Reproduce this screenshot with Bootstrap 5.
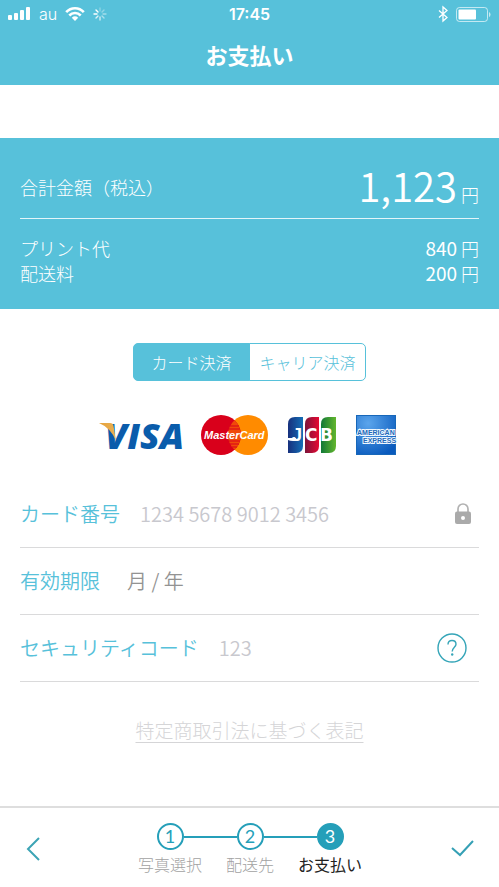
<!DOCTYPE html>
<html lang="ja">
<head>
<meta charset="utf-8">
<meta name="viewport" content="width=device-width, initial-scale=1">
<title>お支払い</title>
<link href="https://cdn.jsdelivr.net/npm/bootstrap@5.3.0/dist/css/bootstrap.min.css" rel="stylesheet">
<style>
:root { --sky: #57c1da; --teal: #259fb9; --rule: #dadadb; }
body { font-family: "Noto Sans CJK JP", sans-serif; font-weight: 300; background: #fff; }
svg { display: block; flex: none; overflow: visible; }
.bg-sky { background: var(--sky); color: #fff; }
.status { font-family: Inter, sans-serif; font-size: 16px; line-height: 28px; padding: 0 8px; }
.status > div { flex: 1 1 0; }
.clock { font-weight: 600; }
.page-title { font-size: 22px; line-height: 32px; font-weight: 700; padding: 10px 0 15px; margin: 0; }
.summary { margin-top: 53px; padding: 18px 20px 23px; font-size: 18px; line-height: 25px; }
.total { padding-bottom: 4px; border-bottom: 1px solid #e3f5f9; margin-bottom: 17px; }
.amount { font-size: 40px; line-height: 58px; font-weight: 350; }
.digits { font-size: 19px; line-height: 19px; font-weight: 400; }
dt { font-weight: 300; }
.methods { width: 233px; margin: 34px auto 0; }
.methods .btn { flex: 1 1 0; padding: 0; font-size: 16px; line-height: 36px; font-weight: 300; white-space: nowrap;
  --bs-btn-color: var(--sky); --bs-btn-border-color: var(--sky); --bs-btn-border-radius: 5px;
  --bs-btn-active-bg: var(--sky); --bs-btn-active-border-color: var(--sky); --bs-btn-active-color: #fff;
  --bs-btn-hover-color: var(--sky); --bs-btn-hover-border-color: var(--sky); }
.brands { padding: 34px 5px 0 0; }
.entry-list { padding: 26px 20px 0; }
.entry { height: 67px; border-bottom: 1px solid var(--rule); font-size: 20px; }
.entry label { color: var(--sky); white-space: nowrap; font-weight: 350; }
.entry .form-control { min-width: 0; flex: 1 1 0; border: 0; padding: 0 0 0 20px; font-size: 20px; line-height: 30px; background: none; font-weight: 350; box-shadow: none; }
.entry .expiry { padding-left: 27px; }
.entry .form-control::placeholder { color: #c8c8ce; opacity: 1; }
.entry .expiry::placeholder { color: #939393; }
.legal-note { padding-top: 34px; }
.legal { font-size: 19px; line-height: 28px; color: #d5d5d7; text-underline-offset: 4px; text-decoration-thickness: 1px; }
.footer-bar { border-top: 2px solid #dedede; padding: 15px 19px 13px 20px; background: #fff; }
.steps { font-size: 16px; line-height: 20px; color: #a2a2a2; }
.steps li { width: 80px; white-space: nowrap; text-align: center; }
.line { flex: 1 1 0; height: 2px; background: var(--teal); }
.dot { width: 27px; height: 27px; border: 2px solid var(--teal); border-radius: 50%; color: var(--teal); font: 400 18px/23px Lato, sans-serif; }
.active-step .dot { background: var(--teal); color: #fff; }
.active-step { color: #222; font-weight: 400; }
.plain { border: 0; background: none; padding: 0; }
</style>
<script src="https://cdn.jsdelivr.net/npm/bootstrap@5.3.0/dist/js/bootstrap.bundle.min.js"></script>
</head>
<body class="d-flex flex-column min-vh-100">
<header class="bg-sky">
  <div class="status d-flex align-items-center">
    <div class="d-flex align-items-center">
      <svg width="23" height="14" fill="#fff"><rect y="8" width="4" height="5" rx="1"/><rect x="6" y="6" width="4" height="7" rx="1"/><rect x="12" y="3" width="4" height="10" rx="1"/><rect x="18" width="4" height="13" rx="1"/></svg>
      <span class="ms-2 me-2">au</span>
      <svg width="20" height="14" viewBox="0 0 20 14" fill="none" stroke="#fff" stroke-width="2.6"><path d="M1.2 5.2C6-.1 14-.1 18.800 5.2M4.300 8.500C7.500 5.200 12.500 5.200 15.700 8.500"/><path d="M6.800 10.700Q10 7.900 13.200 10.700L10 14Z" fill="#fff" stroke="none"/></svg>
      <svg class="ms-2" width="14" height="14" viewBox="-7 -7 14 14" stroke="#fff" stroke-width="1.4" stroke-linecap="round"><path d="M0-3V-6" opacity=".3"/><path d="M2-2L4-4" opacity=".35"/><path d="M3 0H6" opacity=".45"/><path d="M2 2L4 4" opacity=".5"/><path d="M0 3V6" opacity=".7"/><path d="M-2 2L-4 4" opacity=".8"/><path d="M-3 0H-6M-2-2L-4-4"/></svg>
    </div>
    <span class="clock">17:45</span>
    <div class="d-flex align-items-center justify-content-end">
      <svg class="me-2" width="10" height="16" viewBox="0 0 10 16" fill="none" stroke="#fff" stroke-width="1.300"><path d="M1 4.500L9 11.500L5 15V1L9 4.500L1 11.500"/></svg>
      <svg width="35" height="15" viewBox="0 0 35 15"><rect x=".5" y=".5" width="31" height="14" rx="3" fill="none" stroke="#fff" stroke-opacity=".65"/><rect x="2.500" y="2.500" width="17.500" height="10" rx="1" fill="#fff"/><path d="M33 5V10Q34.500 9.500 34.500 7.500T33 5" fill="#fff" fill-opacity=".65"/></svg>
    </div>
  </div>
  <h1 class="page-title text-center">お支払い</h1>
</header>

<main class="flex-grow-1">
  <dl class="summary bg-sky mb-0">
    <div class="total d-flex justify-content-between align-items-center">
      <dt class="pt-1">合計金額（税込）</dt>
      <dd class="mb-0"><span class="amount">1,123</span> 円</dd>
    </div>
    <div class="d-flex justify-content-between"><dt>プリント代</dt><dd class="mb-0"><span class="digits">840</span> 円</dd></div>
    <div class="d-flex justify-content-between"><dt>配送料</dt><dd class="mb-0"><span class="digits">200</span> 円</dd></div>
  </dl>

  <div class="methods btn-group d-flex" role="group" aria-label="お支払い方法">
    <button type="button" class="btn btn-outline-info active" aria-pressed="true">カード決済</button>
    <button type="button" class="btn btn-outline-info" aria-pressed="false">キャリア決済</button>
  </div>

  <div class="brands d-flex justify-content-center align-items-center">
    <svg width="86" height="40" viewBox="0 0 86 40" role="img" aria-label="VISA">
      <defs><linearGradient id="gold" x2="1"><stop stop-color="#e6a23c"/><stop offset="1" stop-color="#eab153"/></linearGradient></defs>
      <text x="6" y="34" font-family="Open Sans, sans-serif" font-size="36" font-weight="800" font-style="italic" fill="#0a5cab">VISA</text>
      <path d="M0 8H11Q14 8 14.500 11L17 26Q12 13 0 8Z" fill="url(#gold)"/>
    </svg>
    <svg class="ms-3" width="67" height="40" viewBox="0 0 67 40" role="img" aria-label="MasterCard">
      <circle cx="47" cy="20" r="20" fill="#ff8b00"/><circle cx="20" cy="20" r="20" fill="#d9001b"/>
      <path d="M33.500 5.200A20 20 0 0 1 33.500 34.800A20 20 0 0 1 33.500 5.200" fill="#f04a0a"/>
      <path d="M29 11H38M28 14H39M28 26H39M29 29H38M31 32H36" stroke="#d9001b"/>
      <text x="3" y="24" font-family="Liberation Sans, sans-serif" font-size="11" font-weight="700" font-style="italic" fill="#fff">MasterCard</text>
    </svg>
    <svg class="ms-3" width="56" height="40" viewBox="0 0 56 40" role="img" aria-label="JCB">
      <defs><linearGradient id="jb" x2="1"><stop stop-color="#17307d"/><stop offset="1" stop-color="#146eb6"/></linearGradient><linearGradient id="jr" x2="1"><stop stop-color="#7b143a"/><stop offset="1" stop-color="#e60932"/></linearGradient><linearGradient id="jg" x2="1"><stop stop-color="#117838"/><stop offset="1" stop-color="#63b62d"/></linearGradient></defs>
      <path d="M4 9Q4 2 11 2H19V31Q19 38 12 38H4Z" fill="url(#jb)"/><path d="M21 9Q21 2 28 2H35V31Q35 38 28 38H21Z" fill="url(#jr)"/><path d="M37 9Q37 2 44 2H52V31Q52 38 45 38H37Z" fill="url(#jg)"/>
      <g font-family="DejaVu Sans, sans-serif" font-size="17" font-weight="700" fill="#fff"><text x="21" y="26">C</text><text x="36" y="26">B</text></g>
      <text x="8" y="26" font-family="Liberation Sans, sans-serif" font-size="18" font-weight="700" fill="#fff">J</text>
      <path d="M4 23H12V26H9Q6 26 4 25Z" fill="#fff"/>
    </svg>
    <svg class="ms-3" width="40" height="40" viewBox="0 0 40 40" role="img" aria-label="AMERICAN EXPRESS">
      <defs><radialGradient id="ax" cx=".3" cy=".2" r=".9"><stop stop-color="#5ba5ec"/><stop offset="1" stop-color="#095abd"/></radialGradient></defs>
      <rect x=".5" y=".5" width="39" height="39" fill="url(#ax)" stroke="#1767b9"/>
      <g font-family="Liberation Sans, sans-serif" font-weight="700" font-size="7" fill="#2269b8" stroke="#eef7ff" stroke-width="2" paint-order="stroke"><text x="1" y="20">AMERICAN</text><text x="7" y="28">EXPRESS</text></g>
    </svg>
  </div>

  <form class="entry-list">
    <div class="entry d-flex align-items-center">
      <label for="card-number">カード番号</label>
      <input id="card-number" class="form-control" type="text" inputmode="numeric" placeholder="1234 5678 9012 3456">
      <svg class="me-2" width="16" height="22" viewBox="0 0 16 22"><path d="M3 9V6A5 5 0 0 1 13 6V9" fill="none" stroke="#b2b2b2" stroke-width="1.700"/><rect y="8.500" width="16" height="12.500" rx="2" fill="#aaa"/><circle cx="8" cy="15" r="2" fill="#fff"/></svg>
    </div>
    <div class="entry d-flex align-items-center">
      <label for="expiry">有効期限</label>
      <input id="expiry" class="form-control expiry" type="text" placeholder="月 / 年">
    </div>
    <div class="entry d-flex align-items-center">
      <label for="code">セキュリティコード</label>
      <input id="code" class="form-control" type="text" inputmode="numeric" placeholder="123">
      <button type="button" class="plain me-2" aria-label="ヘルプ">
        <svg class="me-1" width="30" height="30" viewBox="0 0 30 30" fill="none" stroke="#35a5b8" stroke-width="1.400"><circle cx="15" cy="15" r="14"/><path d="M11 11.500Q11 7.500 15 7.500T19 11.200C19 14 15.200 14.500 15.200 18.500"/><circle cx="15.200" cy="21.500" r="1.200" fill="#35a5b8" stroke="none"/></svg>
      </button>
    </div>
  </form>
  <p class="legal-note text-center mb-4"><a class="legal" href="#">特定商取引法に基づく表記</a></p>
</main>

<footer class="footer-bar d-flex align-items-center justify-content-between">
  <button type="button" class="plain ps-1" aria-label="戻る"><svg width="24" height="24" viewBox="0 0 24 24" fill="none" stroke="#3ca4b5" stroke-width="2"><path d="M15 1L4 12L15 23"/></svg></button>
  <ol class="steps list-unstyled d-flex mb-0">
    <li><div class="d-flex align-items-center"><span class="line invisible"></span><span class="dot">1</span><span class="line"></span></div><div class="pt-1">写真選択</div></li>
    <li><div class="d-flex align-items-center"><span class="line"></span><span class="dot">2</span><span class="line"></span></div><div class="pt-1">配送先</div></li>
    <li class="active-step" aria-current="step"><div class="d-flex align-items-center"><span class="line"></span><span class="dot">3</span><span class="line invisible"></span></div><div class="pt-1">お支払い</div></li>
  </ol>
  <button type="button" class="plain pe-1" aria-label="確定"><svg width="24" height="24" viewBox="0 0 24 24" fill="none" stroke="#35a0b5" stroke-width="2"><path d="M0 11L8 18L21 4"/></svg></button>
</footer>
</body>
</html>
